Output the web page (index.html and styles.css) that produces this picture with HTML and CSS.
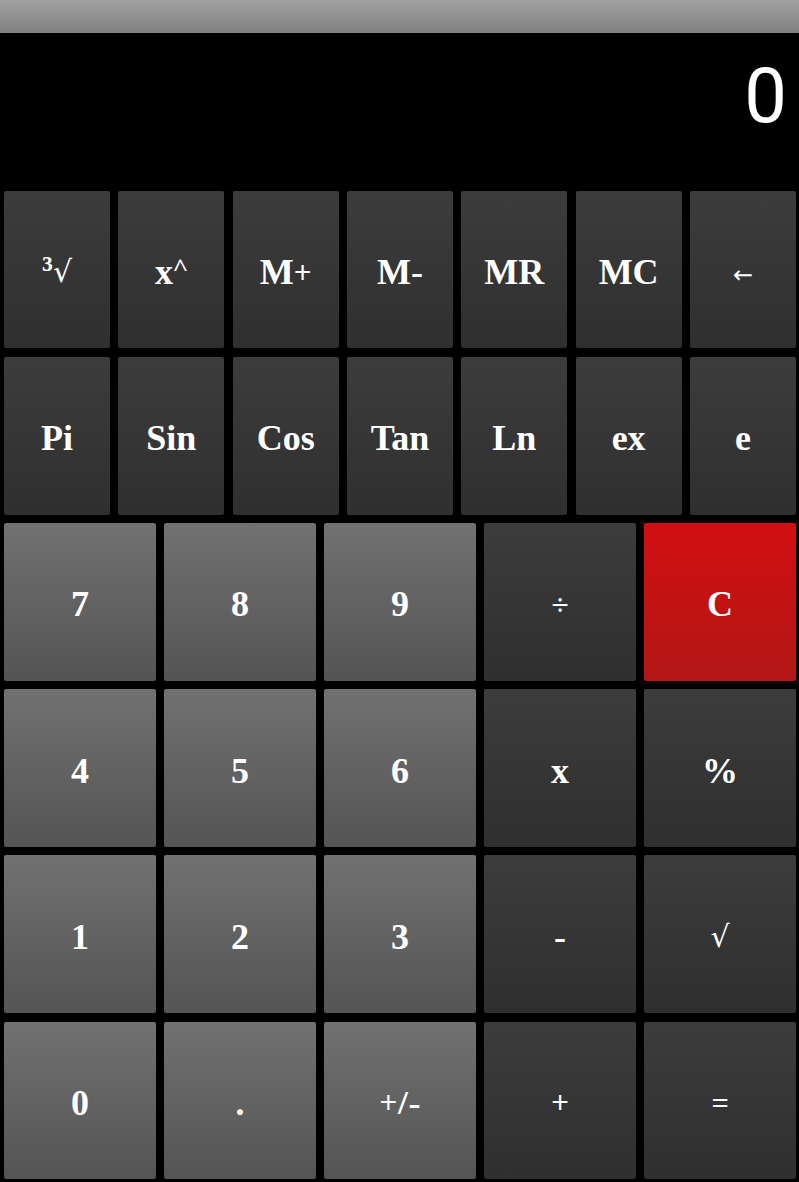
FILE: index.html
```html
<!DOCTYPE html>
<html lang="en">
<head>
<meta charset="utf-8">
<title>Calculator</title>
<link rel="stylesheet" href="styles.css">
</head>
<body>
<div class="app">
  <div class="statusbar"></div>
  <div class="display"><span class="display__value">0</span></div>
  <div class="keypad">
    <div class="row row--7">
      <div class="key key--fn"><span class="sup">³</span><span class="sym sym--root">√</span></div>
      <div class="key key--fn">x<span class="sym sym--caret">^</span></div>
      <div class="key key--fn">M<span class="sym">+</span></div>
      <div class="key key--fn">M-</div>
      <div class="key key--fn">MR</div>
      <div class="key key--fn">MC</div>
      <div class="key key--fn"><span class="sym sym--arrow">←</span></div>
    </div>
    <div class="row row--7">
      <div class="key key--fn">Pi</div>
      <div class="key key--fn">Sin</div>
      <div class="key key--fn">Cos</div>
      <div class="key key--fn">Tan</div>
      <div class="key key--fn">Ln</div>
      <div class="key key--fn">ex</div>
      <div class="key key--fn">e</div>
    </div>
    <div class="row row--5">
      <div class="key key--num">7</div>
      <div class="key key--num">8</div>
      <div class="key key--num">9</div>
      <div class="key key--fn"><span class="sym">÷</span></div>
      <div class="key key--clear">C</div>
    </div>
    <div class="row row--5">
      <div class="key key--num">4</div>
      <div class="key key--num">5</div>
      <div class="key key--num">6</div>
      <div class="key key--fn">x</div>
      <div class="key key--fn">%</div>
    </div>
    <div class="row row--5">
      <div class="key key--num">1</div>
      <div class="key key--num">2</div>
      <div class="key key--num">3</div>
      <div class="key key--fn">-</div>
      <div class="key key--fn"><span class="sym sym--sqrt">√</span></div>
    </div>
    <div class="row row--5">
      <div class="key key--num">0</div>
      <div class="key key--num">.</div>
      <div class="key key--num"><span class="sym">+/</span>-</div>
      <div class="key key--fn"><span class="sym">+</span></div>
      <div class="key key--fn"><span class="sym">=</span></div>
    </div>
  </div>
</div>
</body>
</html>
```

FILE: styles.css
```css
html, body {
  margin: 0;
  padding: 0;
  background: #000;
}

.app {
  width: 799px;
  height: 1182px;
  display: flex;
  flex-direction: column;
  background: #000;
  overflow: hidden;
}

.statusbar {
  height: 33px;
  flex: 0 0 33px;
  background: linear-gradient(to bottom, #a2a2a2, #7f7f7f);
}

.display {
  height: 154px;
  flex: 0 0 154px;
  box-sizing: border-box;
  padding: 25px 12px 0 0;
  display: flex;
  justify-content: flex-end;
  align-items: flex-start;
}

.display__value {
  font-family: Roboto, "Open Sans", sans-serif;
  font-size: 76px;
  line-height: 1;
  font-weight: 400;
  color: #fff;
}

.keypad {
  flex: 1 1 auto;
  box-sizing: border-box;
  padding: 4px 3px 3px 4px;
  display: flex;
  flex-direction: column;
  gap: 8.7px;
}

.row {
  flex: 1 1 0;
  display: grid;
}

.row--7 {
  grid-template-columns: repeat(7, 1fr);
  column-gap: 8.2px;
}

.row--5 {
  grid-template-columns: repeat(5, 1fr);
  column-gap: 8.3px;
}

.key {
  display: flex;
  align-items: center;
  justify-content: center;
  box-sizing: border-box;
  padding-top: 5px;
  border-radius: 2px;
  color: #fff;
  font-family: "Liberation Serif", "Times New Roman", serif;
  font-weight: 700;
  font-size: 36px;
  line-height: 1;
  white-space: nowrap;
}

.key--fn {
  background: linear-gradient(to bottom, #3c3c3c, #2f2f2f);
}

.key--num {
  background: linear-gradient(to bottom, #717171, #545454);
}

.key--clear {
  background: linear-gradient(to bottom, #d20f10, #b21616);
}

.sym {
  font-family: "Open Sans", "DejaVu Sans", sans-serif;
  font-weight: 400;
  font-size: 31px;
}

.sym--arrow {
  font-family: "DejaVu Sans", sans-serif;
  font-size: 24px;
  position: relative;
  top: 3px;
}

.sym--root,
.sym--sqrt {
  font-family: "DejaVu Sans", sans-serif;
  font-size: 30px;
}

.sym--caret {
  font-size: 26px;
  position: relative;
  top: -4px;
}

.sup {
  font-size: 36px;
  position: relative;
  top: -3px;
}
```
